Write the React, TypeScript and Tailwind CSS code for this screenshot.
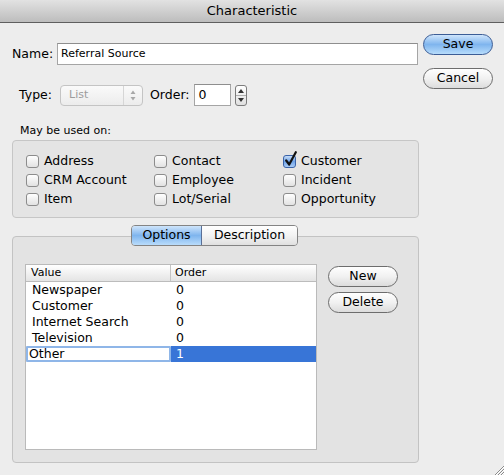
import React from 'react';

const font = { fontFamily: '"DejaVu Sans", "Lucida Grande", Verdana, sans-serif' };

function Check({ label, checked }: { label: string; checked?: boolean }) {
  return (
    <div className="flex items-center h-[19px]">
      <div className="relative w-[13px] h-[13px] shrink-0">
        {checked ? (
          <>
            <div className="w-[13px] h-[13px] rounded-[3px] border border-[#3a62a8] bg-gradient-to-b from-[#c6dcf7] via-[#6fa3e8] to-[#a9cbf5]" />
            <svg className="absolute -top-[4px] left-[1px]" width="14" height="16" viewBox="0 0 14 16">
              <path d="M2.2 9.5 L5.2 13.5 L11.8 1.2" fill="none" stroke="#111" strokeWidth="2.2" strokeLinecap="round" strokeLinejoin="round" />
            </svg>
          </>
        ) : (
          <div className="w-[13px] h-[13px] rounded-[3px] border border-[#8c8c8c] bg-gradient-to-b from-[#ffffff] via-[#f0f0f0] to-[#e2e2e2]" />
        )}
      </div>
      <span className="ml-[5px] text-[12.5px] text-black leading-none">{label}</span>
    </div>
  );
}

function AquaButton({ label, primary }: { label: string; primary?: boolean }) {
  return (
    <div
      className={`w-[70px] h-[21px] rounded-full border flex items-center justify-center text-[12.5px] text-black ${
        primary
          ? 'border-[#3c5d96] bg-gradient-to-b from-[#cfe5fb] via-[#7fb5ee] to-[#b7dcfb]'
          : 'border-[#6d6d6d] bg-gradient-to-b from-[#ffffff] via-[#f1f1f1] to-[#dcdcdc]'
      }`}
    >
      {label}
    </div>
  );
}

const rows: [string, string][] = [
  ['Newspaper', '0'],
  ['Customer', '0'],
  ['Internet Search', '0'],
  ['Television', '0'],
];

export default function App() {
  return (
    <div className="w-[504px] h-[475px] bg-[#ededed] relative overflow-hidden select-none" style={font}>
      {/* title bar */}
      <div className="h-[23px] bg-gradient-to-b from-[#e2e2e2] to-[#bdbdbd] border-b border-[#5f5f5f] flex items-center justify-center text-[13px] text-black">
        Characteristic
      </div>

      <div className="px-[12px]">
        {/* top rows */}
        <div className="flex">
          <div className="w-[407px] pt-[20px]">
            <div className="flex items-center h-[22px]">
              <span className="w-[40px] text-right text-[12.5px] text-black">Name:</span>
              <div className="ml-[5px] w-[361px] h-[22px] bg-white border border-[#a5a5a5] border-t-[#8e8e8e] flex items-center pl-[3px] text-[11px] text-black">
                Referral Source
              </div>
            </div>
            <div className="flex items-center h-[22px] mt-[19px]">
              <span className="w-[40px] text-right text-[12.5px] text-black">Type:</span>
              <div className="ml-[8px] w-[83px] h-[21px] rounded-[4px] border border-[#c4c4c4] bg-gradient-to-b from-[#fafafa] to-[#ececec] flex items-center">
                <span className="flex-1 pl-[8px] text-[11px] text-[#9c9c9c]">List</span>
                <div className="w-px h-full bg-[#d6d6d6]" />
                <svg className="mx-[6px]" width="6" height="11" viewBox="0 0 6 11">
                  <path d="M3 0.5 L5.5 4 L0.5 4 Z M3 10.5 L5.5 7 L0.5 7 Z" fill="#a8a8a8" />
                </svg>
              </div>
              <span className="ml-[7px] text-[12.5px] text-black">Order:</span>
              <div className="ml-[4px] w-[37px] h-[22px] bg-white border border-[#a5a5a5] border-t-[#8e8e8e] flex items-center pl-[4px] text-[12.5px] text-black">
                0
              </div>
              <div className="ml-[4px] w-[12px] h-[21px] rounded-[3px] border border-[#7c7c7c] bg-gradient-to-b from-[#ffffff] to-[#e0e0e0] flex flex-col items-center justify-between py-[3px]">
                <svg width="6" height="4" viewBox="0 0 6 4"><path d="M3 0 L6 4 L0 4 Z" fill="#333" /></svg>
                <div className="w-[10px] h-px bg-[#b0b0b0]" />
                <svg width="6" height="4" viewBox="0 0 6 4"><path d="M3 4 L6 0 L0 0 Z" fill="#333" /></svg>
              </div>
            </div>
          </div>
          <div className="ml-[5px] pt-[11px]">
            <AquaButton label="Save" primary />
            <div className="mt-[13px]">
              <AquaButton label="Cancel" />
            </div>
          </div>
        </div>

        {/* May be used on */}
        <div className="mt-[19px] pl-[8px] text-[11px] leading-[12px] text-black">May be used on:</div>
        <div className="mt-[3px] w-[407px] h-[78px] rounded-[4px] border border-[#c6c6c6] bg-[#e4e4e4] pl-[13px] pt-[11px] grid grid-cols-[128px_129px_1fr]">
          <div>
            <Check label="Address" />
            <Check label="CRM Account" />
            <Check label="Item" />
          </div>
          <div>
            <Check label="Contact" />
            <Check label="Employee" />
            <Check label="Lot/Serial" />
          </div>
          <div>
            <Check label="Customer" checked />
            <Check label="Incident" />
            <Check label="Opportunity" />
          </div>
        </div>

        {/* tabs */}
        <div className="mt-[7px] w-[407px] relative">
          <div className="relative z-10 flex justify-center">
            <div className="flex h-[21px] ml-[-2px] rounded-[4px] border border-[#848484] overflow-hidden text-[12.5px] text-black">
              <div className="w-[70px] flex items-center justify-center bg-gradient-to-b from-[#cfe5fb] via-[#7fb5ee] to-[#b9dcfb] border-r border-[#5a6f96]">
                Options
              </div>
              <div className="w-[95px] flex items-center justify-center bg-gradient-to-b from-[#ffffff] via-[#f3f3f3] to-[#e0e0e0]">
                Description
              </div>
            </div>
          </div>
          <div className="-mt-[10px] h-[227px] rounded-[4px] border border-[#c3c3c3] bg-[#e3e3e3] flex pl-[12px] pt-[27px]">
            {/* table */}
            <div className="w-[292px] h-[186px] bg-white border border-[#bababa] flex flex-col">
              <div className="h-[17px] flex border-b border-[#bcbcbc] bg-gradient-to-b from-[#ffffff] to-[#e4e4e4] text-[11px] text-black">
                <div className="w-[145px] border-r border-[#c4c4c4] pl-[5px] flex items-center">Value</div>
                <div className="flex-1 pl-[4px] flex items-center">Order</div>
              </div>
              {rows.map(([v, o]) => (
                <div key={v} className="h-[16px] flex items-center text-[12.5px] text-black">
                  <div className="w-[145px] pl-[6px]">{v}</div>
                  <div className="flex-1 pl-[5px]">{o}</div>
                </div>
              ))}
              <div className="h-[16px] flex text-[12.5px]">
                <div className="w-[145px] h-[16px] bg-white border-2 border-[#8fb6e8] rounded-[1px] flex items-center pl-[1px] text-black">
                  Other
                </div>
                <div className="flex-1 bg-[#3875d7] text-white pl-[5px] flex items-center">1</div>
              </div>
            </div>
            <div className="ml-[11px] pt-[2px]">
              <AquaButton label="New" />
              <div className="mt-[5px]">
                <AquaButton label="Delete" />
              </div>
            </div>
          </div>
        </div>
      </div>

      {/* resize grip */}
      <svg className="absolute right-0 bottom-0" width="11" height="11" viewBox="0 0 11 11">
        <path d="M2 11 L11 2 M5 11 L11 5 M8 11 L11 8" stroke="#8a8a8a" strokeWidth="1" />
        <path d="M3 11 L11 3 M6 11 L11 6 M9 11 L11 9" stroke="#ffffff" strokeWidth="1" />
      </svg>
    </div>
  );
}
